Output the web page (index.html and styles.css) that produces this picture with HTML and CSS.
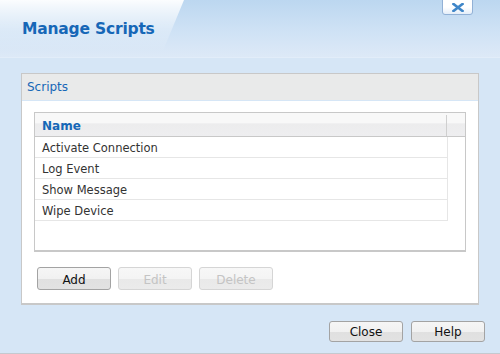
FILE: index.html
```html
<!DOCTYPE html>
<html lang="en">
<head>
  <meta charset="UTF-8" />
  <title>Manage Scripts</title>
  <link rel="stylesheet" href="styles.css">
</head>
<body>
  <div class="dialog">
    <div class="header">
      <div class="gloss"></div>
      <h1 class="title">Manage Scripts</h1>
      <button class="close-x" title="Close">
        <svg width="12" height="9" viewBox="0 0 12 9"><path d="M1.5 1 L10.5 8 M10.5 1 L1.5 8" stroke="#3f86c8" stroke-width="2.6" stroke-linecap="square"/></svg>
      </button>
    </div>
    <div class="content">
      <div class="panel">
        <div class="panel-head">Scripts</div>
        <div class="panel-body">
          <div class="grid">
            <div class="grid-head">
              <div class="col-name">Name</div>
              <div class="col-rest"></div>
            </div>
            <div class="grid-rows">
              <div class="row">Activate Connection</div>
              <div class="row">Log Event</div>
              <div class="row">Show Message</div>
              <div class="row">Wipe Device</div>
            </div>
          </div>
          <div class="actions">
            <button class="btn">Add</button>
            <button class="btn" disabled>Edit</button>
            <button class="btn" disabled>Delete</button>
          </div>
        </div>
      </div>
    </div>
    <div class="footer">
      <button class="btn">Close</button>
      <button class="btn">Help</button>
    </div>
  </div>
</body>
</html>
```

FILE: styles.css
```css
:root {
  --bg: #d6e6f6;
  --blue: #1667b7;
  --border: #c8c8c8;
  --font: Tahoma, "DejaVu Sans", Verdana, sans-serif;
}
* { box-sizing: border-box; margin: 0; padding: 0; }
body {
  background: var(--bg);
  font-family: var(--font);
  width: 500px;
  height: 354px;
  overflow: hidden;
}
.dialog {
  height: 354px;
  display: flex;
  flex-direction: column;
  border-bottom: 1px solid #c4c9cf;
}
.header {
  position: relative;
  height: 58px;
  background: linear-gradient(to bottom, #bcd7f0 0%, #cfe2f5 55%, #dde9f7 100%);
  border-bottom: 1px solid #e2edf9;
  padding: 20px 0 0 22px;
  overflow: hidden;
}
.gloss {
  position: absolute;
  top: 0;
  left: 0;
  width: 100%;
  height: 100%;
  background: linear-gradient(to bottom, rgba(255,255,255,0.95) 0%, rgba(255,255,255,0.25) 55%, rgba(255,255,255,0) 90%);
  clip-path: polygon(0 0, 184px 0, 160px 58px, 0 58px);
}
.title {
  position: relative;
  font-size: 15.5px;
  font-weight: bold;
  color: var(--blue);
  letter-spacing: -0.2px;
}
.close-x {
  position: absolute;
  top: -2px;
  right: 27px;
  width: 31px;
  height: 17px;
  border: 1px solid #92b1d6;
  border-radius: 0 0 3px 3px;
  background: linear-gradient(to bottom, #ffffff 0%, #ffffff 55%, #e4eef9 100%);
  display: flex;
  align-items: center;
  justify-content: center;
  padding-top: 2px;
}
.content {
  padding: 15px 21px 0 21px;
}
.panel {
  height: 232px;
  background: #fff;
  border: 1px solid var(--border);
  border-bottom-width: 2px;
}
.panel-head {
  height: 27px;
  background: #e9eaea;
  border-bottom: 1px solid #d6e6f6;
  color: var(--blue);
  font-size: 12px;
  padding: 6px 0 0 5px;
}
.panel-body {
  padding: 11px 12px 0 12px;
}
.grid {
  height: 140px;
  border: 1px solid var(--border);
  border-bottom-width: 2px;
  display: flex;
  flex-direction: column;
}
.grid-head {
  height: 24px;
  display: flex;
  background: linear-gradient(to bottom, #f8f8f8 0%, #f8f8f8 45%, #ececed 46%, #eeeef0 100%);
  border-bottom: 1px solid var(--border);
}
.col-name {
  width: 412px;
  border-right: 1px solid #cfcfcf;
  margin: 2px 0 0 0;
  padding: 4px 0 0 7px;
  color: var(--blue);
  font-weight: bold;
  font-size: 12px;
}
.col-rest {
  flex: 1;
}
.grid-rows {
  width: 413px;
  border-right: 1px solid #e6e6e6;
}
.row {
  height: 21px;
  border-bottom: 1px solid #e6e6e6;
  padding: 4px 0 0 7px;
  font-size: 11.5px;
  color: #333;
}
.actions {
  display: flex;
  gap: 7px;
  padding: 15px 0 0 3px;
}
.btn {
  width: 74px;
  height: 23px;
  font-family: var(--font);
  font-size: 12px;
  color: #111;
  border: 1px solid #a3a3a3;
  border-radius: 3px;
  background: linear-gradient(to bottom, #f6f6f6 0%, #f1f1f1 50%, #e0e0e0 51%, #e2e2e2 100%);
  padding-top: 2px;
}
.btn:disabled {
  color: #c4c4c4;
  border-color: #d5d5d5;
  background: linear-gradient(to bottom, #f7f7f7 0%, #f4f4f4 50%, #e9e9e9 51%, #ebebeb 100%);
}
.footer {
  display: flex;
  justify-content: flex-end;
  gap: 8px;
  padding: 16px 15px 0 0;
}
.footer .btn {
  height: 21px;
  padding-top: 1px;
}
```
